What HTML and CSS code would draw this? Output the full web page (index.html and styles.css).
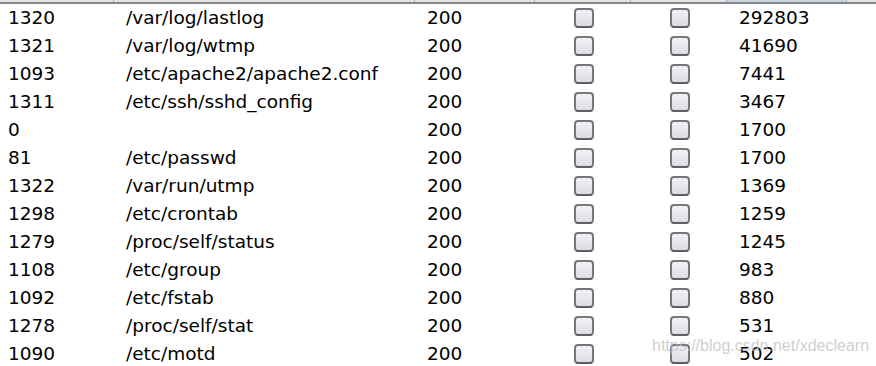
FILE: index.html
```
<!DOCTYPE html>
<html>
<head>
<meta charset="utf-8">
<link rel="stylesheet" href="styles.css">
</head>
<body>
<div class="table">
  <div class="header">
    <div class="hcell"></div>
    <div class="hcell"></div>
    <div class="hcell"></div>
    <div class="hcell"></div>
    <div class="hcell"></div>
    <div class="hcell sorted"></div>
    <div class="hcell last"></div>
  </div>
  <div class="row"><span class="c id">1320</span><span class="c path">/var/log/lastlog</span><span class="c st">200</span><span class="c box"><i class="cb"></i></span><span class="c box"><i class="cb"></i></span><span class="c size">292803</span></div>
  <div class="row"><span class="c id">1321</span><span class="c path">/var/log/wtmp</span><span class="c st">200</span><span class="c box"><i class="cb"></i></span><span class="c box"><i class="cb"></i></span><span class="c size">41690</span></div>
  <div class="row"><span class="c id">1093</span><span class="c path">/etc/apache2/apache2.conf</span><span class="c st">200</span><span class="c box"><i class="cb"></i></span><span class="c box"><i class="cb"></i></span><span class="c size">7441</span></div>
  <div class="row"><span class="c id">1311</span><span class="c path">/etc/ssh/sshd_config</span><span class="c st">200</span><span class="c box"><i class="cb"></i></span><span class="c box"><i class="cb"></i></span><span class="c size">3467</span></div>
  <div class="row"><span class="c id">0</span><span class="c path"></span><span class="c st">200</span><span class="c box"><i class="cb"></i></span><span class="c box"><i class="cb"></i></span><span class="c size">1700</span></div>
  <div class="row"><span class="c id">81</span><span class="c path">/etc/passwd</span><span class="c st">200</span><span class="c box"><i class="cb"></i></span><span class="c box"><i class="cb"></i></span><span class="c size">1700</span></div>
  <div class="row"><span class="c id">1322</span><span class="c path">/var/run/utmp</span><span class="c st">200</span><span class="c box"><i class="cb"></i></span><span class="c box"><i class="cb"></i></span><span class="c size">1369</span></div>
  <div class="row"><span class="c id">1298</span><span class="c path">/etc/crontab</span><span class="c st">200</span><span class="c box"><i class="cb"></i></span><span class="c box"><i class="cb"></i></span><span class="c size">1259</span></div>
  <div class="row"><span class="c id">1279</span><span class="c path">/proc/self/status</span><span class="c st">200</span><span class="c box"><i class="cb"></i></span><span class="c box"><i class="cb"></i></span><span class="c size">1245</span></div>
  <div class="row"><span class="c id">1108</span><span class="c path">/etc/group</span><span class="c st">200</span><span class="c box"><i class="cb"></i></span><span class="c box"><i class="cb"></i></span><span class="c size">983</span></div>
  <div class="row"><span class="c id">1092</span><span class="c path">/etc/fstab</span><span class="c st">200</span><span class="c box"><i class="cb"></i></span><span class="c box"><i class="cb"></i></span><span class="c size">880</span></div>
  <div class="row"><span class="c id">1278</span><span class="c path">/proc/self/stat</span><span class="c st">200</span><span class="c box"><i class="cb"></i></span><span class="c box"><i class="cb"></i></span><span class="c size">531</span></div>
  <div class="row"><span class="c id">1090</span><span class="c path">/etc/motd</span><span class="c st">200</span><span class="c box"><i class="cb"></i></span><span class="c box"><i class="cb"></i></span><span class="c size">502</span></div>
  <div class="watermark">https://blog.csdn.net/xdeclearn</div>
</div>
</body>
</html>
```
FILE: styles.css
```
html, body {
  margin: 0;
  padding: 0;
  background: #ffffff;
}
body {
  width: 876px;
  height: 366px;
  overflow: hidden;
  font-family: "DejaVu Sans", sans-serif;
  font-size: 18.5px;
  color: #000000;
}
.table {
  position: relative;
  width: 876px;
}
.header {
  display: grid;
  grid-template-columns: 114px 301px 120px 96px 96px 120px 1fr;
  height: 2px;
  background: #e4e4e6;
  border-bottom: 2px solid #85858c;
}
.hcell {
  border-right: 1px solid #a8a8ae;
}
.hcell.sorted {
  background: #c6d4e2;
}
.hcell.last {
  border-right: none;
}
.row {
  display: grid;
  grid-template-columns: 114px 301px 120px 96px 96px 120px 1fr;
  height: 28px;
  align-items: center;
}
.c {
  white-space: nowrap;
  line-height: 28px;
}
.id {
  padding-left: 8px;
}
.path, .st, .size {
  padding-left: 12px;
}
.box {
  display: flex;
  justify-content: center;
  align-items: center;
  height: 28px;
}
.cb {
  display: block;
  box-sizing: border-box;
  width: 20px;
  height: 20px;
  border: 2px solid #76767c;
  border-bottom-color: #5e5e64;
  border-radius: 4px;
  background: linear-gradient(#f2f2f4, #dcdce2);
  margin-left: 1px;
}
.watermark {
  position: absolute;
  left: 652px;
  top: 337px;
  font-family: "Liberation Sans", Arial, sans-serif;
  font-size: 16px;
  color: rgba(190, 190, 190, 0.75);
  white-space: nowrap;
}
```
